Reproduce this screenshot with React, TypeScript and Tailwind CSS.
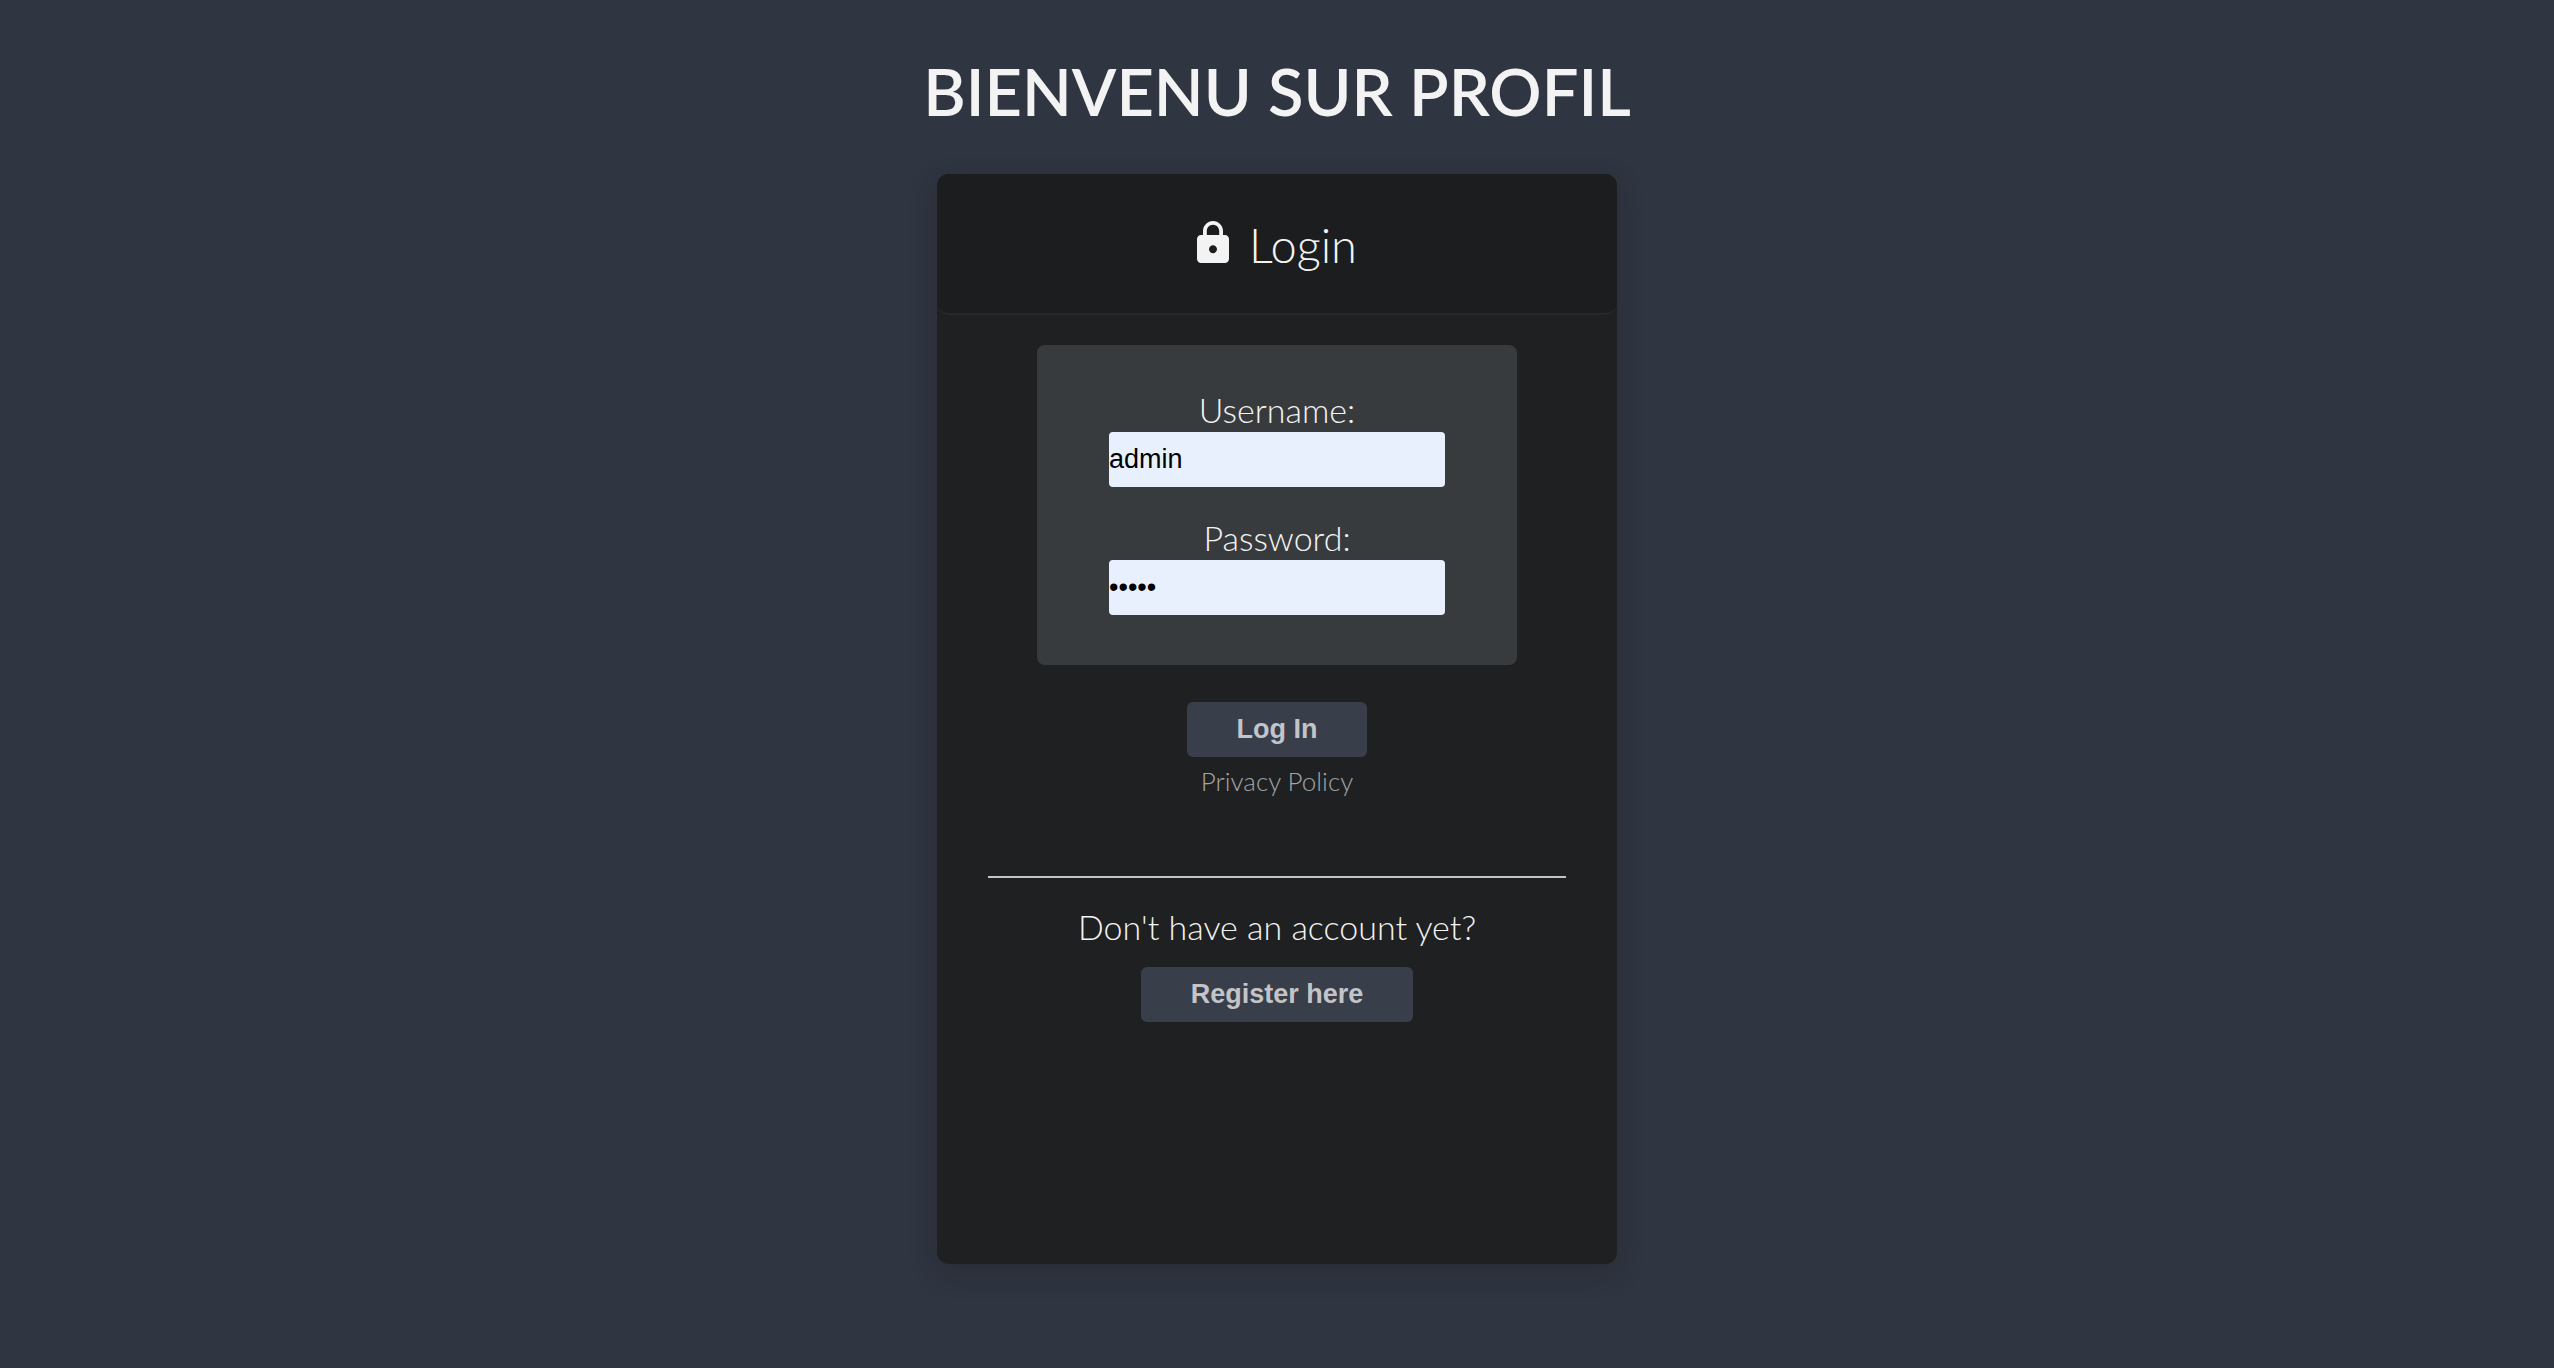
import type { ComponentProps } from "react";

function LockIcon() {
  return (
    <svg viewBox="96 46 320 420" className="h-[42px] w-8 shrink-0" fill="currentColor" aria-hidden="true">
      <path d="M376 186h-20v-40c0-55-45-100-100-100S156 91 156 146v40h-20c-22.002 0-40 17.998-40 40v200c0 22.002 17.998 40 40 40h240c22.002 0 40-17.998 40-40V226c0-22.002-17.998-40-40-40zM256 368c-22.002 0-40-17.998-40-40s17.998-40 40-40 40 17.998 40 40-17.998 40-40 40zm62.002-182H193.998v-40c0-34.004 28.003-62.002 62.002-62.002 34.004 0 62.002 27.998 62.002 62.002v40z" />
    </svg>
  );
}

function Field({ label, id, ...input }: ComponentProps<"input"> & { label: string; id: string }) {
  return (
    <div className="flex w-full flex-col items-center gap-0.5">
      <label htmlFor={id} className="text-[34px] leading-10">
        {label}
      </label>
      <input
        id={id}
        className="h-[55px] w-full rounded bg-[#e8f0fe] font-['Liberation_Sans',Arial,sans-serif] text-[27px] text-black outline-none"
        {...input}
      />
    </div>
  );
}

function Button(props: ComponentProps<"button">) {
  return (
    <button
      className="h-[55px] rounded-md bg-[#383e4a] px-[50px] font-['Liberation_Sans',Arial,sans-serif] text-[27px] font-bold text-[#c3c4c7]"
      {...props}
    />
  );
}

export default function App() {
  return (
    <div className="flex min-h-screen flex-col items-center bg-[#2f3541] pt-12 pb-[104px] font-['Lato',sans-serif] font-light text-[#f3f3f3]">
      <h1 className="text-center text-[65px] leading-[86px] font-semibold">BIENVENU SUR PROFIL</h1>
      <main className="mt-10 flex w-full max-w-[680px] grow flex-col rounded-xl bg-[#1f2021] shadow-[0_8px_24px_rgba(32,32,32,0.4)]">
        <header className="rounded-xl border-b-2 border-[#252728] bg-[#1b1d1e] pt-[41px] pb-[38px]">
          <h2 className="flex items-baseline justify-center gap-5 text-[47px] leading-[60px] font-light">
            <LockIcon />
            Login
          </h2>
        </header>
        <form className="mt-[30px] flex flex-col items-center" onSubmit={(e) => e.preventDefault()}>
          <div className="flex w-full max-w-[480px] flex-col gap-[31px] rounded-lg bg-[#383b3d] px-[72px] pt-[45px] pb-[50px]">
            <Field id="username" label="Username:" type="text" defaultValue="admin" />
            <Field id="password" label="Password:" type="password" defaultValue="admin" />
          </div>
          <div className="mt-[37px]">
            <Button type="submit">Log In</Button>
          </div>
        </form>
        <a href="#privacy" className="mt-[7px] self-center text-[26px] leading-[34px] text-[#a3a5a5]">
          Privacy Policy
        </a>
        <hr className="mx-[51px] mt-[78px] border-t-2 border-[#c3c4c4]" />
        <section className="mt-[29px] flex flex-col items-center gap-5">
          <p className="text-[34px] leading-10">Don't have an account yet?</p>
          <Button type="button">Register here</Button>
        </section>
      </main>
    </div>
  );
}
